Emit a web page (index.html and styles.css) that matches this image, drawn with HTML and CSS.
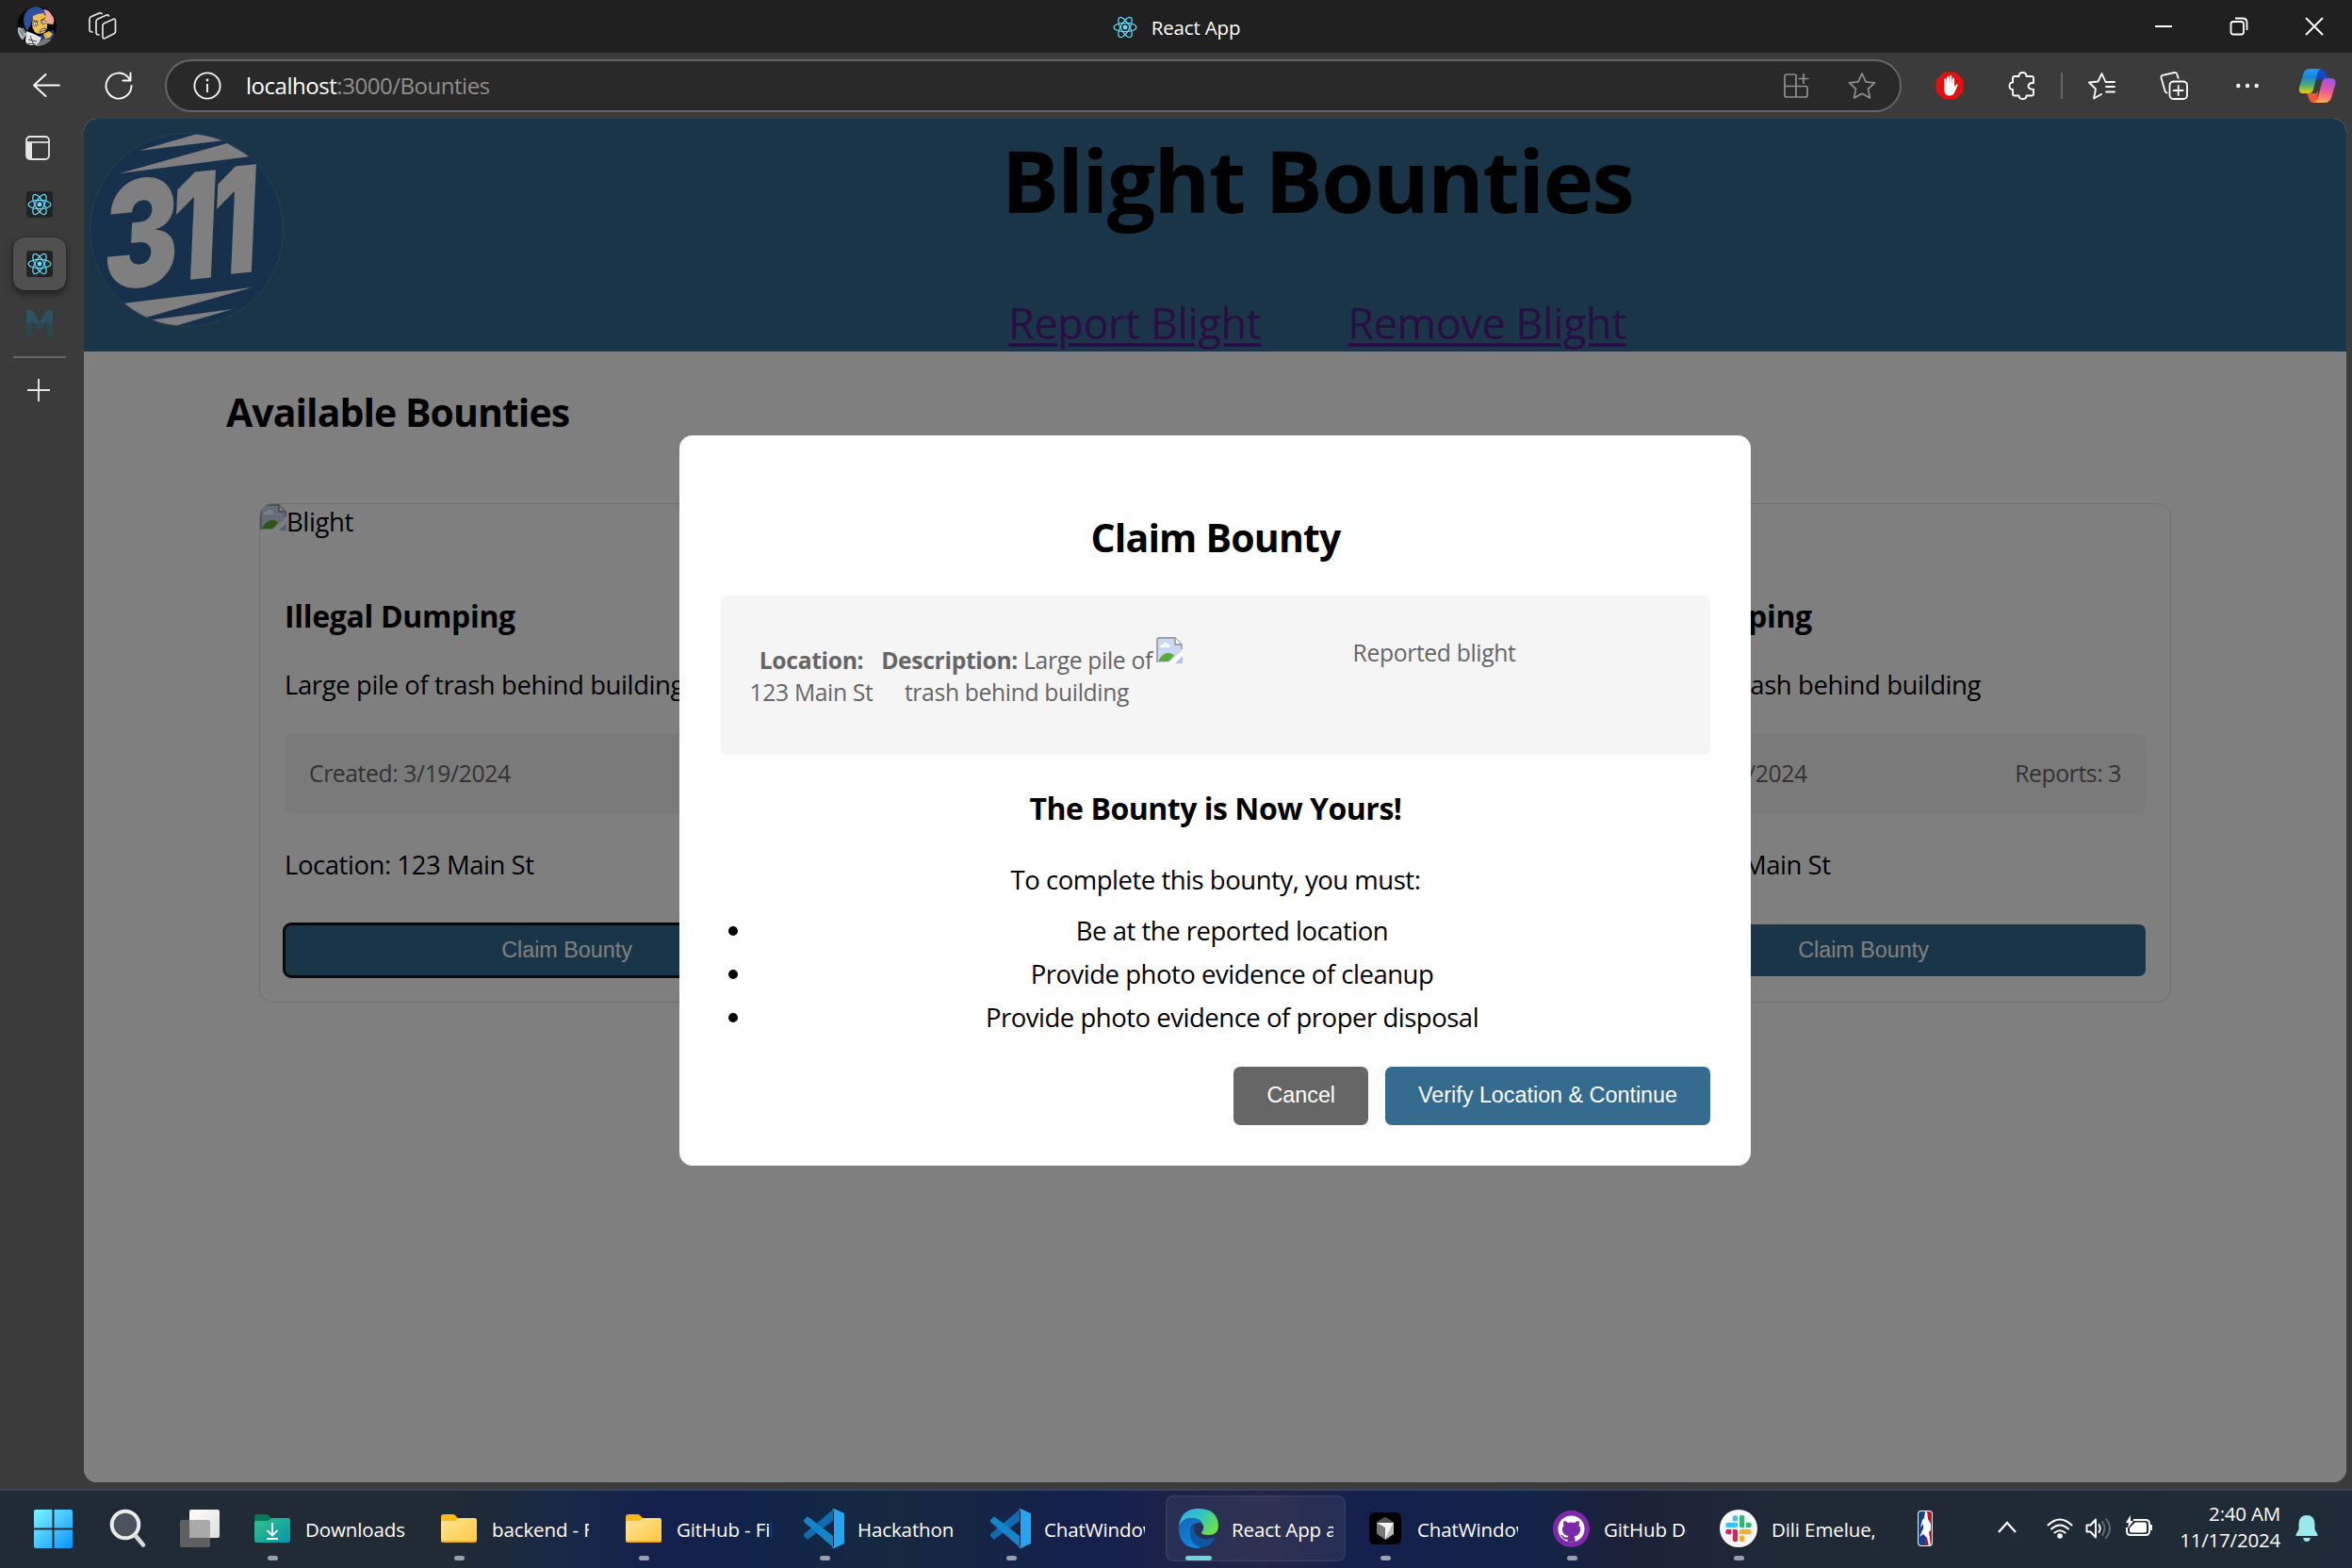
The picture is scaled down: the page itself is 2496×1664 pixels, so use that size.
FILE: index.html
```html
<!DOCTYPE html>
<html lang="en">
<head>
<meta charset="utf-8">
<title>React App</title>
<link rel="stylesheet" href="styles.css">
</head>
<body>
<svg class="defs" width="0" height="0" aria-hidden="true">
  <defs>
    <symbol id="react" viewBox="-12 -12 24 24">
      <circle r="2.3" fill="#61dafb"/>
      <g fill="none" stroke="#61dafb" stroke-width="1.1">
        <ellipse rx="11" ry="4.3"/>
        <ellipse rx="11" ry="4.3" transform="rotate(60)"/>
        <ellipse rx="11" ry="4.3" transform="rotate(120)"/>
      </g>
    </symbol>
    <symbol id="broken" viewBox="0 0 28 28">
      <path d="M3 1h18l6 6v10L17 27H1V3z" fill="#c9d8f5"/>
      <path d="M1 27V3q0-2 2-2h17l7 7v5" fill="none" stroke="#a0a0a0" stroke-width="1.8"/>
      <path d="M20 1v7h7" fill="#fff" stroke="#a0a0a0" stroke-width="1.8"/>
      <path d="M4 11q0-3 3-3 2-4 5-1 3 1 2 4z" fill="#fff"/>
      <path d="M2 26q4-9 11-9 4 0 6 3l-6 6z" fill="#5aab34"/>
      <path d="M12 28L28 14v6l-8 8z" fill="#fff"/>
      <path d="M20 28l8-8v8z" fill="#b4c3e0"/>
    </symbol>
    <linearGradient id="folderG" x1="0" y1="0" x2="1" y2="1"><stop offset="0" stop-color="#ffe59a"/><stop offset="1" stop-color="#ffc83d"/></linearGradient>
    <symbol id="folder" viewBox="0 0 38 30">
      <path d="M0 8V3q0-3 3-3h9q2 0 3 1l3 3h17v6H0z" fill="#fbb915"/>
      <path d="M0 9q0-2 2-2h11q2 0 3-1l1-1q1-1 3-1h16q2 0 2 2v21q0 3-2 3H2q-2 0-2-3z" fill="url(#folderG)"/>
      <path d="M1 29h36" stroke="#eda514" stroke-width="1.5"/>
    </symbol>
    <symbol id="vscode" viewBox="0 0 43 42">
      <path d="M31 1v12L5 32q-1 1-2 0l-3-3q-1-1 0-2z" fill="#0f6cb0"/>
      <path d="M0 14q-1-1 0-2l3-3q1-1 2 0l26 20v12z" fill="#1585c9"/>
      <path d="M32 0l11 5v32l-11 5q-1 0-2-1 2 0 2-3V4q0-3-2-3 1-1 2-1z" fill="#25a4ef"/>
    </symbol>
  </defs>
</svg>

<header class="titlebar">
  <div class="titlebar-left">
    <svg class="avatar" viewBox="0 0 42 42">
      <defs><clipPath id="av"><circle cx="21" cy="21" r="21"/></clipPath></defs>
      <g clip-path="url(#av)">
        <path d="M0 0h42v42H0z" fill="#050505"/>
        <path d="M28 3q6 0 9 6 4 5 1 10l-6-1z" fill="#f2a79c"/>
        <path d="M8 20Q5 9 12 3q8-6 16 0l3 6-14 2-3 10-4 5z" fill="#2f4f9e"/>
        <path d="M17 10q5-3 11-3 4 5 4 13 0 6-4 8-6 2-9-1-3-4-3-8z" fill="#f0c04f"/>
        <path d="M23 32l10-6 6-1 1 6-8 8-11 1z" fill="#223c7c"/>
        <path d="M28 29l6-3 4 3-3 4-5 1z" fill="#e8b548"/>
        <path d="M10 26l8 3 8 4-4 8H11l-2-4z" fill="#e6e6e6"/>
        <path d="M1 22l6 1 3 6-4 7-6-5z" fill="#b4b7bf"/>
        <path d="M22 39l7-5 9 1-7 7H20z" fill="#77777c"/>
        <circle cx="19.500" cy="18.500" r="2.300" fill="#fff" stroke="#333" stroke-width=".8"/>
        <circle cx="28" cy="16.500" r="2.300" fill="#fff" stroke="#333" stroke-width=".8"/>
        <circle cx="19.800" cy="18.700" r=".8"/><circle cx="27.600" cy="16.700" r=".8"/>
        <path d="M16.500 14.500l6 1.500M25 15l5-3M24 26q2-3.500 6-3l.5 2q-3.500-.5-6 2.500z" stroke="#4d3512" fill="#fff" stroke-width="1"/>
        <path d="M12 35l9 2M12 39l8 1M3 25l4 6M5 23l3 5M14 31l4 10" stroke="#444" stroke-width="1" fill="none"/>
      </g>
    </svg>
    <svg class="workspaces" viewBox="0 0 30 30" fill="none" stroke="#e4e4e4" stroke-width="1.700" stroke-linejoin="round" stroke-linecap="round">
      <path d="M15 14q0-1.500 1.500-2.300L26 7.500q2.500-1 2.500 1.500v11.500q0 1.500-1.500 2.200L17.500 27.500q-2.500 1-2.500-1.500z"/>
      <path d="M11 24q-3 0-3-2.500V10q0-2 1.500-2.800L19 3q2-.6 2.500 1"/>
      <path d="M4 21q-3 0-3-2.500V7.500q0-2 1.500-2.800L11.500.9q2-.6 2.500.6"/>
    </svg>
  </div>
  <div class="titlebar-title">
    <svg class="title-react"><use href="#react"/></svg>
    <span>React App</span>
  </div>
  <div class="titlebar-buttons">
    <span class="winbtn"><svg width="20" height="20" viewBox="0 0 20 20"><path d="M1 10h18" stroke="#fff" stroke-width="2"/></svg></span>
    <span class="winbtn"><svg width="20" height="20" viewBox="0 0 20 20" fill="none" stroke="#fff" stroke-width="1.800"><rect x="1.500" y="5" width="13.500" height="13.500" rx="2.500"/><path d="M6 1.500h8q4.500 0 4.500 4.500v8"/></svg></span>
    <span class="winbtn"><svg width="20" height="20" viewBox="0 0 20 20"><path d="M1 1l18 18M19 1L1 19" stroke="#fff" stroke-width="1.900"/></svg></span>
  </div>
</header>

<nav class="toolbar">
  <span class="slot slot-back"><svg width="30" height="26" viewBox="0 0 30 26" fill="none" stroke="#fff" stroke-width="1.900" stroke-linecap="round" stroke-linejoin="round"><path d="M29 12.500H2M14.500 1L2 12.500 14.500 24"/></svg></span>
  <span class="slot"><svg width="30" height="30" viewBox="0 0 30 30" fill="none" stroke="#fff" stroke-width="1.900" stroke-linecap="round" stroke-linejoin="round"><path d="M28.500 15A13.500 13.500 0 1 1 25 6l2.500 3.500M27.500 1.500v8h-8"/></svg></span>
  <div class="address">
    <svg class="info" viewBox="0 0 30 30"><circle cx="15" cy="15" r="13.600" fill="none" stroke="#f2f2f2" stroke-width="1.900"/><path d="M15 13v9" stroke="#f2f2f2" stroke-width="1.900"/><circle cx="15" cy="9" r="1.400" fill="#f2f2f2"/></svg>
    <span class="url"><span class="host">localhost</span><span>:3000/Bounties</span></span>
    <span class="slot-a"><svg width="28" height="28" viewBox="0 0 28 28" fill="none" stroke="#8f8f8f" stroke-width="1.700"><path d="M13.500 2H4Q2 2 2 4v20q0 2 2 2h20q2 0 2-2v-8q0-1.500-1.500-1.500H2M14 2v24M22 1v11M16.500 6.500h11"/></svg></span>
    <span class="slot-a"><svg width="30" height="30" viewBox="0 0 30 30" fill="none" stroke="#8f8f8f" stroke-width="1.700" stroke-linejoin="round"><path d="M15 2l4 8.800 9.500 1.100-7 6.500 1.900 9.600-8.400-4.800L6.600 28l1.900-9.600-7-6.500L11 10.800z"/></svg></span>
  </div>
  <span class="slot slot-first"><svg width="30" height="30" viewBox="0 0 30 30"><path d="M9 .5h12l8.500 8.500v12L21 29.500H9L.5 21V9z" fill="#e60f0f"/><path d="M9.300 16V8q1.200-1.300 2.200 0l.4 5 .3-7.500q1.200-1.300 2.200 0l.3 7 .3-8q1.200-1.300 2.200 0l.2 8.500.6-6q1.200-1 2 0l.1 9 1.700-2.500q1.500-.8 2 .5l-3.500 8q-1.600 3.500-5.300 3.500-5 0-5.700-5z" fill="#fff"/></svg></span>
  <span class="slot slot-wide"><svg width="30" height="30" viewBox="0 0 30 30" fill="none" stroke="#fff" stroke-width="1.900" stroke-linejoin="round"><path d="M7 5h4.500q0-4 4-4t4 4H25q2 0 2 2v5q-5-.5-5.500 3.300 0 3.700 5.500 3.700v4.500q0 2-2 2h-5.500q0 3.500-4 3.500t-4-3.500H7q-2 0-2-2V19q-3.500 0-3.500-3.800T5 11.500V7q0-2 2-2z"/></svg></span>
  <span class="divider"></span>
  <span class="slot"><svg width="30" height="30" viewBox="0 0 30 30" fill="none" stroke="#fff" stroke-width="1.800" stroke-linejoin="round" stroke-linecap="round"><path d="M29 11H19.500L15.500 2l-4 8.500L2 11.500l7 7L7 28.500l8-4.500M29 16h-9M29 21.500h-9"/></svg></span>
  <span class="slot slot-wide"><svg width="30" height="30" viewBox="0 0 30 30" fill="none" stroke="#fff" stroke-width="1.800" stroke-linejoin="round" stroke-linecap="round"><rect x="10.500" y="10.500" width="18.500" height="18.500" rx="4"/><path d="M19.700 15v10M14.700 20h10M7.500 22.500q-1.500-.3-2-2L1.500 6.500q-.4-2 1.500-2.700L15.500 1q2-.4 2.700 1.500l1.500 4.500"/></svg></span>
  <span class="slot"><svg width="26" height="8" viewBox="0 0 26 8" fill="#fff"><circle cx="3.300" cy="4" r="2.200"/><circle cx="13" cy="4" r="2.200"/><circle cx="22.700" cy="4" r="2.200"/></svg></span>
  <span class="slot slot-copilot"><svg width="40" height="38" viewBox="0 0 40 38">
    <defs>
      <linearGradient id="cp1" x1="0" y1="0" x2="0" y2="1"><stop offset="0" stop-color="#1e9df1"/><stop offset=".35" stop-color="#1787d8"/><stop offset=".7" stop-color="#57b26a"/><stop offset="1" stop-color="#f6cf08"/></linearGradient>
      <linearGradient id="cp2" x1=".6" y1="0" x2=".4" y2="1"><stop offset="0" stop-color="#9d50f0"/><stop offset=".55" stop-color="#f05a8d"/><stop offset="1" stop-color="#ffae55"/></linearGradient>
    </defs>
    <path d="M19 1h4q5 0 6.500 5l1.500 5h-7l-5 2z" fill="#1647c9"/>
    <path d="M20 37h-4q-4 0-5-5l-2-5h10l2-3z" fill="#f0582f"/>
    <path d="M12 1h12q-3 1-4 6l-4 16q-1 4-5 4H5q-5 0-4-6L5.500 6Q7 1 12 1z" fill="url(#cp1)"/>
    <path d="M28 37H16q4-1 5-6l4-15q1-5 5-5h5q5 0 4.500 6l-4.500 15q-2 5-7 5z" fill="url(#cp2)"/>
  </svg></span>
</nav>

<div class="body">
  <aside class="tabs">
    <svg class="tab-toggle" viewBox="0 0 26 26"><rect x="1" y="1" width="24" height="24" rx="4" fill="none" stroke="#e6e6e6" stroke-width="1.800"/><path d="M1 7h24" stroke="#e6e6e6" stroke-width="1.700"/><path d="M1 7h6v18H4q-3 0-3-3z" fill="#e6e6e6"/></svg>
    <span class="tab tab-one"><svg class="tab-react"><use href="#react"/></svg></span>
    <span class="tab tab-active"><svg class="tab-react"><use href="#react"/></svg></span>
    <svg class="tab-m" viewBox="0 0 28 28"><defs><linearGradient id="mg" x1="0" y1="0" x2="0" y2="1"><stop offset=".48" stop-color="#2c5263"/><stop offset=".5" stop-color="#28474f"/></linearGradient></defs><path d="M0 28V0h6l8 13 8-13h6v28h-6V11l-8 12L6 11v17z" fill="url(#mg)"/></svg>
    <span class="tab-line"></span>
    <svg class="tab-plus" viewBox="0 0 24 24"><path d="M12 0v24M0 12h24" stroke="#e6e6e6" stroke-width="1.900"/></svg>
  </aside>

  <main class="page">
    <header class="hero">
      <svg class="logo" viewBox="0 0 206 206">
        <defs><clipPath id="lc"><circle cx="103" cy="103" r="102"/></clipPath></defs>
        <circle cx="103" cy="103" r="102.500" fill="#2e629b" stroke="#5c7d96" stroke-width="1"/>
        <g clip-path="url(#lc)" fill="#fff">
          <path d="M52 19L118 0l24 8z"/>
          <path d="M32 43L146 11l24 14z"/>
          <path d="M36 181l136-17L56 197z"/>
          <path d="M62 199l90-12-68 20z"/>
        </g>
        <g class="logo-digits" fill="#fff">
          <text transform="matrix(.76 -.076 -.044 1 13 167)">3</text>
          <text text-anchor="end" transform="matrix(.7 -.07 -.044 1 134 153)">1</text>
          <text text-anchor="end" transform="matrix(.7 -.07 -.044 1 177 147)">1</text>
        </g>
      </svg>
      <div class="hero-text">
        <h1>Blight Bounties</h1>
        <div class="links"><a>Report Blight</a><a>Remove Blight</a></div>
      </div>
    </header>

    <h2 class="section-title">Available Bounties</h2>
    <div class="cards">
      <article class="card">
        <div class="card-img"><svg class="broken"><use href="#broken"/></svg><span>Blight</span></div>
        <h3>Illegal Dumping</h3>
        <p class="desc">Large pile of trash behind building</p>
        <div class="meta"><span>Created: 3/19/2024</span></div>
        <p class="loc">Location: 123 Main St</p>
        <button class="claim claim-focus">Claim Bounty</button>
      </article>
      <article class="card">
        <div class="card-img"><svg class="broken"><use href="#broken"/></svg></div>
        <h3></h3>
        <p class="desc"></p>
        <div class="meta"></div>
        <p class="loc"></p>
        <button class="claim"></button>
      </article>
      <article class="card">
        <div class="card-img"><svg class="broken"><use href="#broken"/></svg></div>
        <h3>Illegal Dumping</h3>
        <p class="desc">Large pile of trash behind building</p>
        <div class="meta"><span>Created: 3/19/2024</span><span>Reports: 3</span></div>
        <p class="loc">Location: 123 Main St</p>
        <button class="claim">Claim Bounty</button>
      </article>
    </div>

    <div class="overlay">
      <section class="modal">
        <h2>Claim Bounty</h2>
        <div class="summary">
          <p class="sum-loc"><b>Location:</b><br>123 Main St</p>
          <p class="sum-desc"><b>Description:</b> Large pile of<br>trash behind building</p>
          <div class="sum-img"><svg class="broken"><use href="#broken"/></svg><span class="sum-alt">Reported blight</span></div>
        </div>
        <h3>The Bounty is Now Yours!</h3>
        <p class="must">To complete this bounty, you must:</p>
        <ul>
          <li><span>Be at the reported location</span></li>
          <li><span>Provide photo evidence of cleanup</span></li>
          <li><span>Provide photo evidence of proper disposal</span></li>
        </ul>
        <div class="actions"><button class="cancel">Cancel</button><button class="verify">Verify Location &amp; Continue</button></div>
      </section>
    </div>
  </main>
</div>

<footer class="taskbar">
  <svg class="start" viewBox="0 0 41 41"><defs><linearGradient id="wg" gradientUnits="userSpaceOnUse" x1="0" y1="0" x2="41" y2="41"><stop offset="0" stop-color="#7af6ff"/><stop offset=".5" stop-color="#45c3ff"/><stop offset="1" stop-color="#0a93ff"/></linearGradient></defs><path d="M2 0h17.500v19.500H0V2q0-2 2-2zM21.500 0H39q2 0 2 2v17.500H21.500zM0 21.500h19.500V41H2q-2 0-2-2zM21.500 21.500H41V39q0 2-2 2H21.500z" fill="url(#wg)"/></svg>
  <svg class="search" viewBox="0 0 40 42"><circle cx="17" cy="17" r="14.300" fill="#4a525d" stroke="#ececec" stroke-width="4"/><path d="M28 29l8 9.500" stroke="#d9dbde" stroke-width="4.500" stroke-linecap="round"/></svg>
  <svg class="taskview" viewBox="0 0 42 40"><defs><linearGradient id="tv" x1="0" y1="0" x2="1" y2="1"><stop offset="0" stop-color="#fff"/><stop offset="1" stop-color="#dedede"/></linearGradient></defs><rect x="0" y="11" width="32" height="29" rx="2" fill="#5f5f5f"/><rect x="10" y="0" width="32" height="30" rx="2" fill="url(#tv)"/><path d="M10 11h20q2 0 2 2v17H12q-2 0-2-2z" fill="#a9a9a9"/></svg>

  <div class="app app-dl"><svg class="ico" width="38" height="30" viewBox="0 0 38 30"><defs><linearGradient id="dg" x1="0" y1="0" x2="1" y2="1"><stop offset="0" stop-color="#35c08c"/><stop offset="1" stop-color="#0596aa"/></linearGradient></defs><path d="M0 8V3q0-3 3-3h9q2 0 3 1l3 3v5H0z" fill="#067a58"/><path d="M0 9q0-2 2-2h11q2 0 3-1l1-1q1-1 3-1h16q2 0 2 2v21q0 3-2 3H2q-2 0-2-3z" fill="url(#dg)"/><path d="M19 9v13M13.500 17l5.500 5.500 5.500-5.500M13 26h12" stroke="#fff" stroke-width="1.800" fill="none"/></svg><span class="label">Downloads</span></div>
  <div class="app app-backend"><svg class="ico" width="38" height="30"><use href="#folder"/></svg><span class="label">backend - File</span></div>
  <div class="app app-github"><svg class="ico" width="38" height="30"><use href="#folder"/></svg><span class="label">GitHub - File</span></div>
  <div class="app app-hack"><svg class="ico" width="43" height="42"><use href="#vscode"/></svg><span class="label">Hackathon</span></div>
  <div class="app app-chat"><svg class="ico" width="43" height="42"><use href="#vscode"/></svg><span class="label">ChatWindow</span></div>
  <div class="app app-edge"><svg class="ico" width="42" height="42" viewBox="0 0 42 42">
    <defs>
      <linearGradient id="e1" x1="0" y1="0" x2="1" y2=".5"><stop offset="0" stop-color="#2fb4ee"/><stop offset=".5" stop-color="#2fc1c9"/><stop offset="1" stop-color="#68e04f"/></linearGradient>
      <linearGradient id="e2" x1="0" y1="0" x2=".5" y2="1"><stop offset="0" stop-color="#1664b8"/><stop offset="1" stop-color="#0b86e0"/></linearGradient>
    </defs>
    <path d="M0 19Q2 0 21 0q20 0 21 18 0 10-11 10-7 0-7-3 3-3 2-7-3-8-12-8Q4 10 0 19z" fill="url(#e1)"/>
    <path d="M0 20Q3 10 13 10q11 0 13 8-1-3-5-3-9 0-9 11 0 11 12 15l-3 1Q0 42 0 20z" fill="url(#e2)"/>
    <path d="M17 17q-5 4-5 10 1 13 14 14 9-2 12-9 1-2-1-1-12 4-18-3-4-5-2-11z" fill="#0f559f"/>
  </svg><span class="label">React App and</span></div>
  <div class="app app-cursor"><svg class="ico" width="34" height="34" viewBox="0 0 34 34"><rect width="34" height="34" rx="6" fill="#000"/><path d="M17 5l9 5.500v12L17 29l-9-6.500v-12z" fill="#777"/><path d="M17 5l9 5.500-9 3-9-3z" fill="#505050"/><path d="M8 11h18L17 29V16z" fill="#f4f4f4"/><path d="M26 11v12l-9 6z" fill="#b9b9b9"/></svg><span class="label">ChatWindow</span></div>
  <div class="app app-desktop"><svg class="ico" width="39" height="39" viewBox="0 0 39 39"><circle cx="19.500" cy="19.500" r="19.500" fill="#8129ad"/><circle cx="19.500" cy="19.500" r="14" fill="#fff"/><path d="M11.500 11q3 0 4.500 2 3.500-.8 7 0 2-2 4.500-2 1 3 0 5 3 3 1 7-2 4-6 4.500 1 1 1 2.500v3.500h-8v-3q-4 1-6-3l-2-2q3 0 5 3h3q0-1 1-1.500-4.500-.5-6-4-1.500-4 1-7-1-2 0-5z" fill="#7a2aa6"/></svg><span class="label">GitHub Desktop</span></div>
  <div class="app app-slack"><svg class="ico" width="40" height="40" viewBox="0 0 40 40"><circle cx="20" cy="20" r="20" fill="#f6f6f6"/><g stroke-width="5.500" stroke-linecap="round"><path d="M16.500 9v7.500M9 16.500h7.500" stroke="#36c5f0"/><path d="M23.500 8.500v8M23.500 16.500H31" stroke="#2eb67d"/><path d="M23.500 23.500H31M23.500 23.500v8" stroke="#ecb22e"/><path d="M16.500 23.500v8M9 23.500h7.500" stroke="#e01e5a"/></g><path d="M5 20h30M20 5v30" stroke="#f6f6f6" stroke-width="1.800"/><path d="M12 13h7M27 12v7M28 27h-7M13 28v-7" stroke="#f6f6f6" stroke-width="1.600"/></svg><span class="label">Dili Emelue, Slack</span></div>
  <svg class="nba" viewBox="0 0 16 38"><defs><clipPath id="nb"><rect x="1" y="1" width="14" height="36" rx="3"/></clipPath></defs><rect width="16" height="38" rx="4" fill="#fff"/><g clip-path="url(#nb)"><path d="M0 0h8v38H0z" fill="#17408b"/><path d="M8 0h8v38H8z" fill="#c9082a"/><path d="M8 1q3 0 2.500 4l.5 4 3 5v7l-2 2 1 6 1 9h-2l-2-9-4-4-4 3 4-9V14l-3 4 2-8 2-2z" fill="#fff"/></g></svg>
  <svg class="chev" viewBox="0 0 22 14"><path d="M2 12l9-10 9 10" fill="none" stroke="#fff" stroke-width="2.200"/></svg>
  <svg class="wifi" viewBox="0 0 28 22"><g fill="none" stroke="#fff" stroke-width="2.100" stroke-linecap="round"><path d="M1.500 7.500Q14-4.500 26.500 7.500"/><path d="M5 11.500q9-8 18 0"/><path d="M8.500 15.500q5.500-4.500 11 0"/></g><circle cx="14" cy="19" r="2.800" fill="#fff"/></svg>
  <svg class="sound" viewBox="0 0 30 24" fill="none" stroke-width="1.900" stroke-linecap="round" stroke-linejoin="round"><path d="M1.500 8.500h4l5.500-6v19l-5.500-6h-4zM14.500 8q2.500 4 0 8" stroke="#fff"/><path d="M18 5q5 7 0 14M22 2q8 10 0 20" stroke="#646d75"/></svg>
  <svg class="battery" viewBox="0 0 30 24"><path d="M9 5h13q4 0 4 4v8q0 4-4 4H6q-4 0-4-4v-4" fill="none" stroke="#fff" stroke-width="2"/><path d="M11 7.500h10q2 0 2 2v7q0 2-2 2H7q-2 0-2-2v-3z" fill="#fff"/><path d="M27 10h2v6h-2z" fill="#fff"/><path d="M6 0L1 8h3l-1 6 6-8H6z" fill="#fff"/></svg>
  <div class="clock"><span>2:40 AM</span><span>11/17/2024</span></div>
  <svg class="bell" viewBox="0 0 24 28"><path d="M12 0q8 0 8.500 9v6l3 5.500q.5 1.500-1 1.500h-21q-1.500 0-1-1.500l3-5.500V9Q4 0 12 0zM8 24h8q-1 4-4 4t-4-4z" fill="#9be9ec"/></svg>
</footer>
</body>
</html>
```
FILE: styles.css
```css
* { box-sizing: border-box; }
html, body { margin: 0; }
body {
  width: 2496px;
  height: 1664px;
  overflow: hidden;
  display: flex;
  flex-direction: column;
  background: #3b3b3b;
  color: #000;
  font-family: "Open Sans", "Noto Sans", sans-serif;
}
svg { display: block; flex: none; }
.defs { position: absolute; }
h1, h2, h3, p, ul { margin: 0; padding: 0; }
button { border: 0; font-family: "Liberation Sans", Arial, sans-serif; font-size: 23.33px; padding: 0 0 1px; color: #fff; }

/* window title */
.titlebar {
  height: 56px;
  flex: none;
  background: #202020;
  display: grid;
  grid-template-columns: 1fr auto 1fr;
  align-items: center;
}
.titlebar-left { display: flex; align-items: center; padding-left: 18px; }
.avatar { width: 42px; height: 42px; }
.workspaces { width: 30px; height: 30px; margin-left: 34px; }
.titlebar-title { display: flex; align-items: center; gap: 15px; color: #fff; font-size: 20.5px; line-height: 28px; padding: 1px 0 0 1px; letter-spacing: -.15px; }
.title-react { width: 26px; height: 26px; }
.titlebar-buttons { display: flex; justify-content: flex-end; }
.winbtn { width: 80px; display: flex; justify-content: center; }

/* browser toolbar */
.toolbar { height: 70px; flex: none; display: flex; align-items: center; }
.slot { width: 77px; display: flex; justify-content: center; }
.slot-back { margin-left: 10px; }
.slot-wide { width: 78px; }
.slot-first { margin-left: 12px; }
.slot-copilot { width: 71px; }
.divider { width: 2px; height: 28px; background: #666; margin: 0 2px; }
.address {
  width: 1843px;
  height: 56px;
  margin-left: 11px;
  border: 2px solid #666;
  border-radius: 28px;
  background: #292929;
  display: flex;
  align-items: center;
  padding: 0 5px 0 28px;
}
.info { width: 30px; height: 30px; }
.url { margin-left: 26px; flex: 1; font-size: 24px; line-height: 34px; color: #8f8f8f; display: flex; letter-spacing: -.47px; }
.host { color: #fff; }
.slot-a { width: 70px; display: flex; justify-content: center; }

/* vertical tabs */
.body { flex: none; height: 1454px; display: flex; }
.tabs { width: 89px; padding-left: 14px; }
.tab-toggle { width: 26px; height: 26px; margin: 18px 0 0 13px; }
.tab { width: 56px; height: 56px; display: flex; align-items: center; justify-content: center; border-radius: 12px; }
.tab-one { margin-top: 19px; }
.tab-active { margin-top: 7px; background: #505050; box-shadow: 0 4px 8px rgba(0, 0, 0, .45), 0 0 2px rgba(0, 0, 0, .5); }
.tab-react { width: 28px; height: 28px; padding: 1px; background: #222; border-radius: 3px; }
.tab-m { width: 28px; height: 28px; margin: 21px 0 0 14px; }
.tab-line { display: block; width: 56px; height: 2px; background: #666; margin-top: 21px; }
.tab-plus { width: 24px; height: 24px; margin: 22px 0 0 15px; }

/* web page */
.page { width: 2401px; height: 1447px; position: relative; border-radius: 14px; overflow: hidden; background: #fff; }
.hero { height: 247px; background: #346b8e; display: flex; }
.logo { width: 206px; height: 206px; margin: 15px 7px 0 6px; }
.logo-digits { font: 900 157px Inter, "Open Sans", sans-serif; }
.hero-text { flex: 1; padding: 3px 2px 0 0; text-align: center; }
h1 { font-size: 91px; line-height: 124px; letter-spacing: -1.6px; }
.links { display: flex; justify-content: center; gap: 92px; margin-top: 60px; font-size: 45px; line-height: 60px; letter-spacing: -.42px; color: #551a8b; }
.links a { text-decoration: underline; text-decoration-thickness: 4px; text-underline-offset: 4px; }
.section-title { margin: 35px 0 0 151px; font-size: 41px; line-height: 58px; letter-spacing: -.95px; }
.cards { margin: 68px 186px 0; display: grid; grid-template-columns: repeat(3, 1fr); gap: 35px; }
.card { height: 530px; border: 1px solid #ddd; border-radius: 14px; overflow: hidden; padding: 0 26px; font-size: 27.5px; line-height: 38px; letter-spacing: -.4px; }
.card-img { display: flex; height: 38px; margin-left: -26px; }
.broken { width: 28px; height: 28px; }
.card h3 { font-size: 32px; line-height: 44px; height: 44px; margin-top: 59px; letter-spacing: -.33px; }
.desc { margin-top: 32px; height: 38px; }
.meta { margin-top: 32px; height: 85px; background: #f5f5f5; border-radius: 7px; padding: 1px 26px 0; display: flex; align-items: center; justify-content: space-between; font-size: 24.7px; color: #666; }
.loc { margin-top: 36px; height: 38px; letter-spacing: -.45px; }
.claim { display: block; width: 100%; height: 55px; margin-top: 44px; border-radius: 7px; background: #346b8e; }
.claim-focus { outline: 3.5px solid #101010; outline-offset: -1.5px; }

/* claim dialog */
.overlay { position: absolute; inset: 0; background: rgba(0, 0, 0, .5); display: flex; align-items: center; justify-content: center; }
.modal { width: 1137px; height: 775px; background: #fff; border-radius: 14px; padding: 79px 43px 0 44px; text-align: center; font-size: 27.5px; line-height: 38px; letter-spacing: -.48px; }
.modal h2 { font-size: 41px; line-height: 58px; letter-spacing: -.8px; }
.summary { margin-top: 33px; height: 169px; background: #f5f5f5; border-radius: 7px; padding: 0 26px; display: flex; color: #666; font-size: 24.7px; line-height: 33.6px; letter-spacing: -.35px; }
.sum-loc { width: 140px; padding-top: 52px; }
.sum-desc { width: 296px; padding-top: 52px; white-space: nowrap; }
.sum-img { flex: 1; display: flex; padding-top: 44px; }
.sum-alt { flex: 1; }
.modal h3 { margin-top: 35px; font-size: 32px; line-height: 44px; }
.must { margin-top: 35px; }
.modal ul { margin-top: 12px; list-style: none; padding-left: 8px; }
.modal li { display: flex; align-items: center; gap: 17px; height: 46px; }
.modal li::before { content: ""; width: 10px; height: 10px; border-radius: 50%; background: #000; }
.modal li > span { flex: 1; }
.actions { display: flex; justify-content: flex-end; gap: 18px; margin-top: 29px; }
.actions button { height: 62px; border-radius: 7px; padding: 0 35px 2px; }
.cancel { background: #666; }
.verify { background: #346b8e; }

/* taskbar */
.taskbar {
  height: 84px;
  flex: none;
  display: flex;
  align-items: center;
  padding-bottom: 2px;
  border-top: 2px solid #3b4556;
  background: linear-gradient(90deg, #202b38 0, #202b35 480px, #17274a 620px, #141f4c 710px, #10234a 800px, #15293f 950px, #141f4d 1150px, #222648 1340px, #141f4d 1450px, #12244a 1620px, #1b2138 1720px, #202a36 1900px, #1f2b38 100%);
  color: #fff;
  font-size: 20.5px;
  line-height: 28px;
  letter-spacing: -.12px;
}
.start { width: 41px; height: 41px; margin-left: 36px; }
.search { width: 40px; height: 42px; margin-left: 39px; }
.taskview { width: 42px; height: 40px; margin-left: 35px; }
.app { position: relative; height: 70px; display: flex; align-items: center; flex: none; }
.app::after { content: ""; position: absolute; left: 14px; bottom: 1px; width: 11px; height: 5px; border-radius: 2.5px; background: #9a9fab; }
.label { overflow: hidden; white-space: nowrap; padding-top: 1px; }
.app-dl { width: 198px; margin-left: 37px; }
.app-dl .label { margin-left: 16px; }
.app-backend { width: 196px; }
.app-backend .label { margin-left: 16px; width: 103px; }
.app-github { width: 189px; }
.app-github .label { margin-left: 16px; width: 101px; }
.app-hack { width: 198px; }
.app-hack .label { margin-left: 14px; width: 103px; }
.app-chat { width: 186px; }
.app-chat .label { margin-left: 14px; width: 107px; }
.app-hack::after, .app-chat::after { left: 17px; }
.app-edge { width: 191px; padding-left: 14px; border-radius: 8px; background: rgba(255, 255, 255, .06); box-shadow: inset 0 0 0 1.5px rgba(255, 255, 255, .07); }
.app-edge .label { margin-left: 14px; width: 108px; }
.app-edge::after { left: 21px; width: 28px; background: #6fd3dc; }
.app-cursor { width: 195px; margin-left: 25px; }
.app-cursor::after { left: 12px; }
.app-cursor .label { margin-left: 17px; width: 107px; }
.app-desktop { width: 177px; }
.app-desktop .label { margin-left: 15px; width: 88px; }
.app-slack { width: 210px; }
.app-slack .label { margin-left: 15px; width: 109px; }
.app-desktop::after, .app-slack::after { left: 15px; }
.nba { width: 16px; height: 38px; }
.chev { width: 22px; height: 14px; margin-left: 68px; margin-bottom: 2px; }
.wifi { width: 28px; height: 22px; margin-left: 31px; }
.sound { width: 30px; height: 24px; margin-left: 13px; }
.battery { width: 30px; height: 24px; margin-left: 12px; margin-bottom: 4px; }
.clock { width: 135px; display: flex; flex-direction: column; align-items: flex-end; padding-bottom: 4px; letter-spacing: -.2px; }
.bell { width: 24px; height: 28px; margin-left: 16px; }
```
